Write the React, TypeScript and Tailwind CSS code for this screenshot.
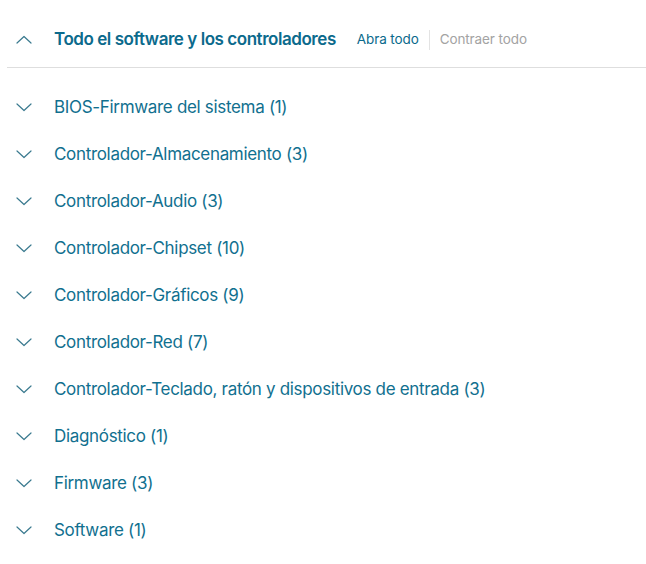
import React, { useState } from 'react';

const categories = [
  'BIOS-Firmware del sistema (1)',
  'Controlador-Almacenamiento (3)',
  'Controlador-Audio (3)',
  'Controlador-Chipset (10)',
  'Controlador-Gráficos (9)',
  'Controlador-Red (7)',
  'Controlador-Teclado, ratón y dispositivos de entrada (3)',
  'Diagnóstico (1)',
  'Firmware (3)',
  'Software (1)',
];

const Chevron = ({ up = false }: { up?: boolean }) => (
  <svg width="16" height="9" viewBox="0 0 16 9" fill="none" className="shrink-0">
    <path
      d={up ? 'M1 8L8 1.5L15 8' : 'M1 1L8 7.5L15 1'}
      stroke="#3a7a8f"
      strokeWidth="1.2"
      strokeLinecap="round"
      strokeLinejoin="round"
    />
  </svg>
);

export default function App() {
  const [open, setOpen] = useState(true);

  return (
    <div className="w-[646px] h-[564px] bg-white font-['Inter',sans-serif] text-[#0e6b8c]">
      <div className="flex items-center h-[68px] pl-[16px] pt-[12px] border-b border-[#dedede] ml-[7px]">
        <button onClick={() => setOpen(!open)} className="flex items-center gap-[22px] -ml-[7px]">
          <Chevron up={open} />
          <span className="text-[17px] font-semibold tracking-[-0.45px] text-[#0b6a8c]">
            Todo el software y los controladores
          </span>
        </button>
        <div className="flex items-center ml-[21px] text-[13.5px] tracking-[-0.1px]">
          <span className="text-[#0b6a8c] pr-[10px]">Abra todo</span>
          <span className="w-px h-[20px] bg-[#e3e3e3]" />
          <span className="text-[#a3a3a3] pl-[10px]">Contraer todo</span>
        </div>
      </div>

      <ul className="pt-[16px]">
        {categories.map((c) => (
          <li key={c} className="flex items-center gap-[22px] h-[47px] pl-[16px]">
            <Chevron />
            <span className="text-[17px] tracking-[-0.32px] text-[#11708f]">{c}</span>
          </li>
        ))}
      </ul>
    </div>
  );
}
